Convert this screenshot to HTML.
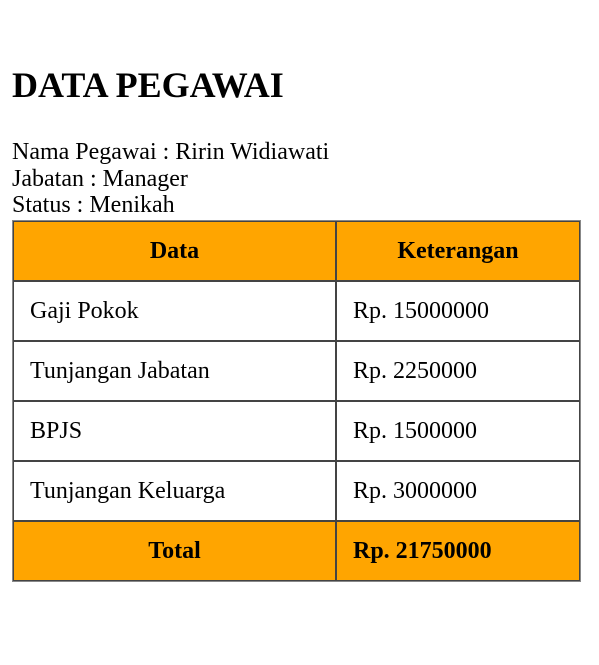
<!DOCTYPE html>
<html><head><style>
body{margin:0;width:599px;height:665px;background:#fff;font-family:"Liberation Serif",serif;color:#000;position:relative}
h1{position:absolute;left:12px;top:63px;margin:0;font-size:36px;line-height:45px;font-weight:bold}
.info{position:absolute;left:12px;top:139px;font-size:24px;line-height:26.5px}
table{position:absolute;left:12px;top:220px;width:569px;border-collapse:separate;border-spacing:0;border:1px solid #888}
td,th{border:1px solid #444;height:60px;padding:0 0 0 16px;font-size:24px;text-align:left;box-sizing:border-box}
th{background:#ffa500;text-align:center;padding:0}
tr.t td{background:#ffa500;font-weight:bold}
td.c{text-align:center;padding:0}
</style></head><body>
<h1>DATA PEGAWAI</h1>
<div class="info">Nama Pegawai : Ririn Widiawati<br>Jabatan : Manager<br>Status : Menikah</div>
<table>
<tr><th style="width:323px">Data</th><th>Keterangan</th></tr>
<tr><td>Gaji Pokok</td><td>Rp. 15000000</td></tr>
<tr><td>Tunjangan Jabatan</td><td>Rp. 2250000</td></tr>
<tr><td>BPJS</td><td>Rp. 1500000</td></tr>
<tr><td>Tunjangan Keluarga</td><td>Rp. 3000000</td></tr>
<tr class="t"><td class="c">Total</td><td>Rp. 21750000</td></tr>
</table>
</body></html>
